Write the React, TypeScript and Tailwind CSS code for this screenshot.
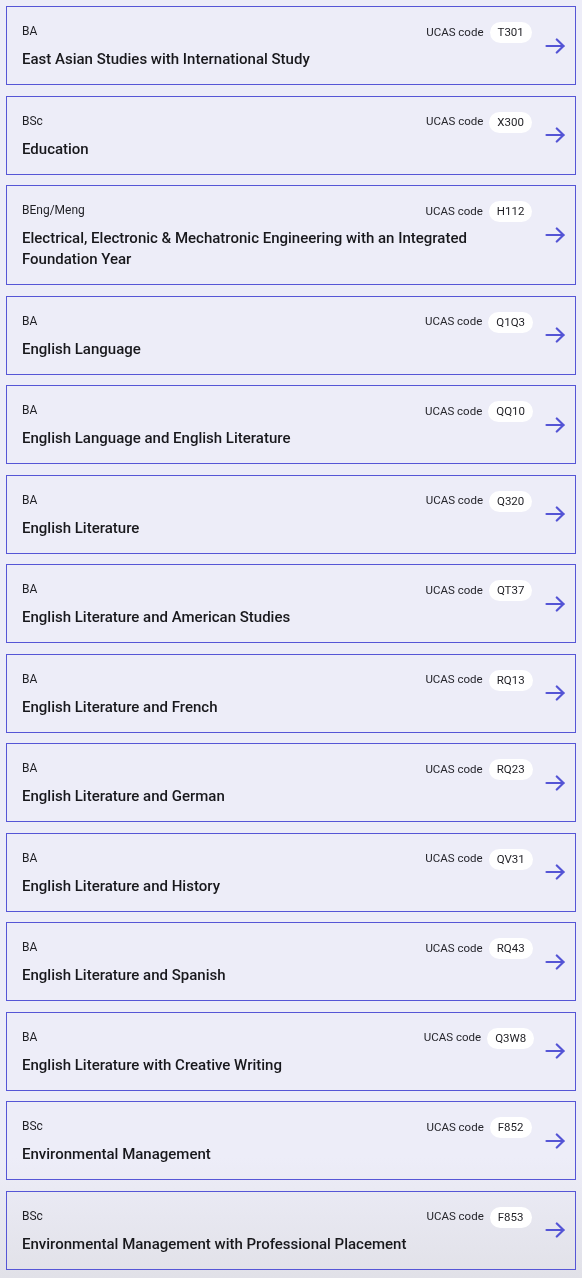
import { useMemo } from "react";

type Course = {
    degree: string;
    title: string;
    ucas: string;
};

const courses: Course[] = [
    { degree: "BA", title: "East Asian Studies with International Study", ucas: "T301" },
    { degree: "BSc", title: "Education", ucas: "X300" },
    { degree: "BEng/Meng", title: "Electrical, Electronic & Mechatronic Engineering with an Integrated Foundation Year", ucas: "H112" },
    { degree: "BA", title: "English Language", ucas: "Q1Q3" },
    { degree: "BA", title: "English Language and English Literature", ucas: "QQ10" },
    { degree: "BA", title: "English Literature", ucas: "Q320" },
    { degree: "BA", title: "English Literature and American Studies", ucas: "QT37" },
    { degree: "BA", title: "English Literature and French", ucas: "RQ13" },
    { degree: "BA", title: "English Literature and German", ucas: "RQ23" },
    { degree: "BA", title: "English Literature and History", ucas: "QV31" },
    { degree: "BA", title: "English Literature and Spanish", ucas: "RQ43" },
    { degree: "BA", title: "English Literature with Creative Writing", ucas: "Q3W8" },
    { degree: "BSc", title: "Environmental Management", ucas: "F852" },
    { degree: "BSc", title: "Environmental Management with Professional Placement", ucas: "F853" },
];

function ArrowIcon() {
    return (
        <svg width="20" height="16" viewBox="0 0 20 16" fill="none" stroke="#5454d5" strokeWidth="2.2" strokeLinecap="round" strokeLinejoin="round">
            <path d="M1.5 8h17" />
            <path d="M11.8 1.5l6.7 6.5-6.7 6.5" />
        </svg>
    )
}

function CourseCard({ course }: { course: Course }) {
    return (
        <a href="#" className="flex flex-row border border-[#5656d6]">
            <div className="flex min-w-0 flex-1 flex-col gap-[6px] pl-[15px] pt-[15px] pb-[14px]">
                <div className="flex flex-row items-start">
                    <span className="flex-1 pt-[1px] text-[12px] leading-[17px] text-[#1f1f24]">{course.degree}</span>
                    <div className="flex w-[120px] flex-row items-center justify-center gap-[6px]">
                        <span className="text-[11.5px] text-[#26262c]">UCAS code</span>
                        <span className="rounded-full bg-white px-2 text-[11.5px] leading-[21px] text-[#1f1f24]">{course.ucas}</span>
                    </div>
                </div>
                <span className="text-[15px] font-medium leading-[21px] text-[#18181c]">{course.title}</span>
            </div>
            <div className="flex items-center pl-[6px] pr-[10px]">
                <ArrowIcon />
            </div>
        </a>
    )
}

export default function App() {
    const list = useMemo(() => courses, []);

    return (
        <div className="relative min-h-screen bg-[#ededf8] font-['Roboto','Noto_Sans',sans-serif]">
            {/* background darkens a little toward the bottom edge */}
            <div className="pointer-events-none fixed inset-x-0 bottom-0 h-[120px] bg-linear-to-b from-[#ededf8] to-[#e1e1e8]" />
            <div className="relative flex flex-col gap-[10.5px] p-[6px]">
                {list.map((course, index) => (
                    <CourseCard course={course} key={index} />
                ))}
            </div>
        </div>
    )
}
